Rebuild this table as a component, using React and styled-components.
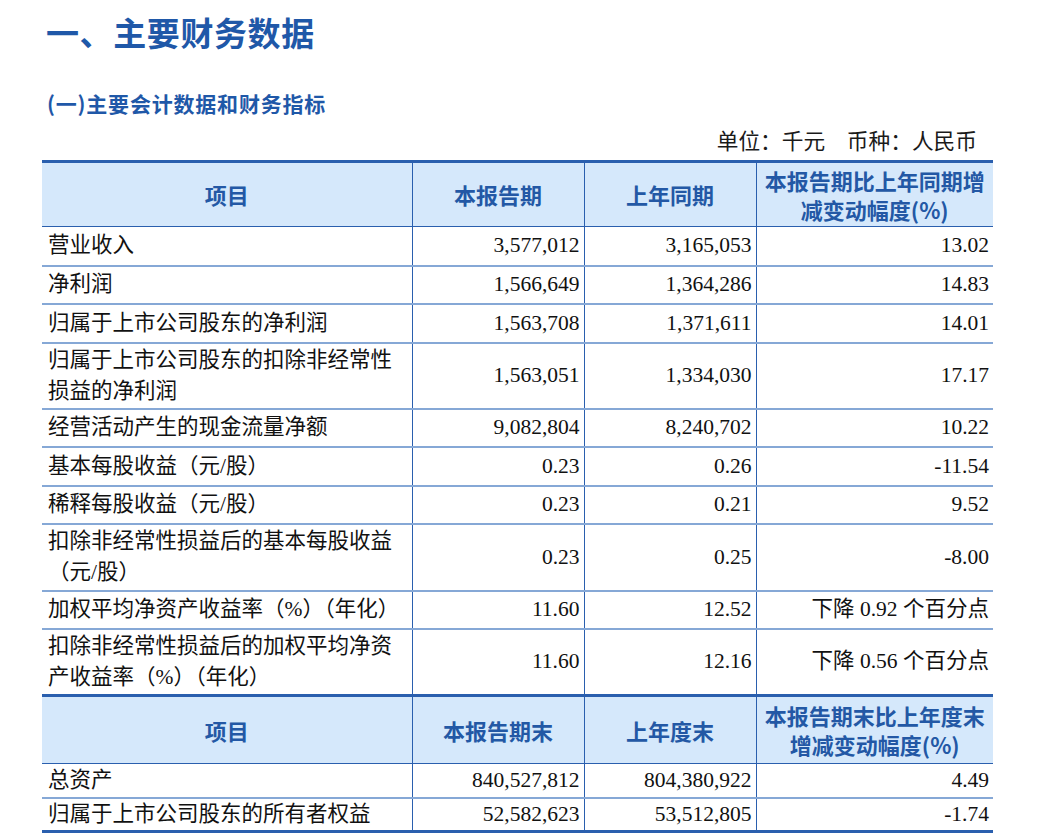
import React from "react";
import styled, { createGlobalStyle } from "styled-components";

const GlobalStyle = createGlobalStyle`
  html, body {
    margin: 0;
    padding: 0;
    background: #ffffff;
  }
  body {
    font-family: "Liberation Serif", "Noto Sans CJK SC", serif;
  }
`;

const BLUE = "#2a5fae";
const ROW_LINE = "#86a8d6";
const HEAD_BG = "#d5e8fb";
const SANS = `"Noto Sans CJK SC", "Noto Sans", sans-serif`;
const SERIF = `"Liberation Serif", "Noto Sans CJK SC", serif`;

const Page = styled.div`
  width: 951px;
  padding: 12px 0 0 42px;
`;

const Title = styled.h1`
  margin: 0;
  padding-left: 4px;
  font-family: ${SANS};
  font-size: 33px;
  font-weight: 700;
  letter-spacing: 0.6px;
  line-height: 40px;
  color: #1f58a8;
`;

const Subtitle = styled.h2`
  margin: 38px 0 0;
  padding-left: 5px;
  font-family: ${SANS};
  font-size: 21px;
  font-weight: 700;
  letter-spacing: 0.8px;
  line-height: 26px;
  color: #1f58a8;
`;

const Unit = styled.div`
  margin-top: 12px;
  padding-right: 16px;
  text-align: right;
  font-family: ${SERIF};
  font-size: 21.7px;
  line-height: 28px;
  color: #1a1a1a;
`;

const Table = styled.table`
  margin-top: 4px;
  width: 951px;
  border-collapse: collapse;
  table-layout: fixed;
  border-top: 3px solid ${BLUE};
  border-bottom: 3px solid ${BLUE};
`;

const HeadRow = styled.tr`
  height: ${(p) => p.$h}px;
  background: ${HEAD_BG};
  border-top: ${(p) => (p.$thick ? `3px solid ${BLUE}` : "none")};
  border-bottom: 1px solid ${BLUE};
`;

const HeadCell = styled.th`
  padding: 0 2px;
  font-family: ${SANS};
  font-size: 22px;
  font-weight: 700;
  line-height: 29px;
  color: #2358a5;
  text-align: center;
  vertical-align: middle;
  white-space: nowrap;
  & + & {
    border-left: 1px solid ${BLUE};
  }
`;

const Row = styled.tr`
  height: ${(p) => p.$h}px;
  border-bottom: 2px solid ${ROW_LINE};
  &:last-child {
    border-bottom: none;
  }
`;

const Cell = styled.td`
  padding: 0 ${(p) => (p.$label ? "6px" : "4px")} 0 6px;
  font-family: ${SERIF};
  font-size: 21.5px;
  line-height: 31px;
  color: #111111;
  text-align: ${(p) => (p.$label ? "left" : "right")};
  vertical-align: middle;
  white-space: nowrap;
  & + & {
    border-left: 1px solid ${BLUE};
  }
`;

const rowsA = [
  { h: 39, label: ["营业收入"], v: ["3,577,012", "3,165,053", "13.02"] },
  { h: 38, label: ["净利润"], v: ["1,566,649", "1,364,286", "14.83"] },
  { h: 39, label: ["归属于上市公司股东的净利润"], v: ["1,563,708", "1,371,611", "14.01"] },
  {
    h: 66,
    label: ["归属于上市公司股东的扣除非经常性", "损益的净利润"],
    v: ["1,563,051", "1,334,030", "17.17"],
  },
  { h: 38, label: ["经营活动产生的现金流量净额"], v: ["9,082,804", "8,240,702", "10.22"] },
  { h: 39, label: ["基本每股收益（元/股）"], v: ["0.23", "0.26", "-11.54"] },
  { h: 38, label: ["稀释每股收益（元/股）"], v: ["0.23", "0.21", "9.52"] },
  {
    h: 67,
    label: ["扣除非经常性损益后的基本每股收益", "（元/股）"],
    v: ["0.23", "0.25", "-8.00"],
  },
  {
    h: 38,
    label: ["加权平均净资产收益率（%）（年化）"],
    v: ["11.60", "12.52", "下降 0.92 个百分点"],
  },
  {
    h: 67,
    label: ["扣除非经常性损益后的加权平均净资", "产收益率（%）（年化）"],
    v: ["11.60", "12.16", "下降 0.56 个百分点"],
  },
];

const rowsB = [
  { h: 34, label: ["总资产"], v: ["840,527,812", "804,380,922", "4.49"] },
  { h: 34, label: ["归属于上市公司股东的所有者权益"], v: ["52,582,623", "53,512,805", "-1.74"] },
];

function BodyRow({ row }) {
  return (
    <Row $h={row.h}>
      <Cell $label>
        {row.label.map((line, i) => (
          <React.Fragment key={line}>
            {i > 0 && <br />}
            {line}
          </React.Fragment>
        ))}
      </Cell>
      {row.v.map((val, i) => (
        <Cell key={i}>{val}</Cell>
      ))}
    </Row>
  );
}

export default function App() {
  return (
    <>
      <GlobalStyle />
      <Page>
        <Title>一、主要财务数据</Title>
        <Subtitle>(一)主要会计数据和财务指标</Subtitle>
        <Unit>单位：千元　币种：人民币</Unit>
        <Table>
          <colgroup>
            <col style={{ width: 370 }} />
            <col style={{ width: 172 }} />
            <col style={{ width: 172 }} />
            <col style={{ width: 237 }} />
          </colgroup>
          <thead>
            <HeadRow $h={65}>
              <HeadCell>项目</HeadCell>
              <HeadCell>本报告期</HeadCell>
              <HeadCell>上年同期</HeadCell>
              <HeadCell>
                本报告期比上年同期增
                <br />
                减变动幅度(%)
              </HeadCell>
            </HeadRow>
          </thead>
          <tbody>
            {rowsA.map((row) => (
              <BodyRow key={row.label[0]} row={row} />
            ))}
            <HeadRow $h={68} $thick>
              <HeadCell>项目</HeadCell>
              <HeadCell>本报告期末</HeadCell>
              <HeadCell>上年度末</HeadCell>
              <HeadCell>
                本报告期末比上年度末
                <br />
                增减变动幅度(%)
              </HeadCell>
            </HeadRow>
            {rowsB.map((row) => (
              <BodyRow key={row.label[0]} row={row} />
            ))}
          </tbody>
        </Table>
      </Page>
    </>
  );
}
